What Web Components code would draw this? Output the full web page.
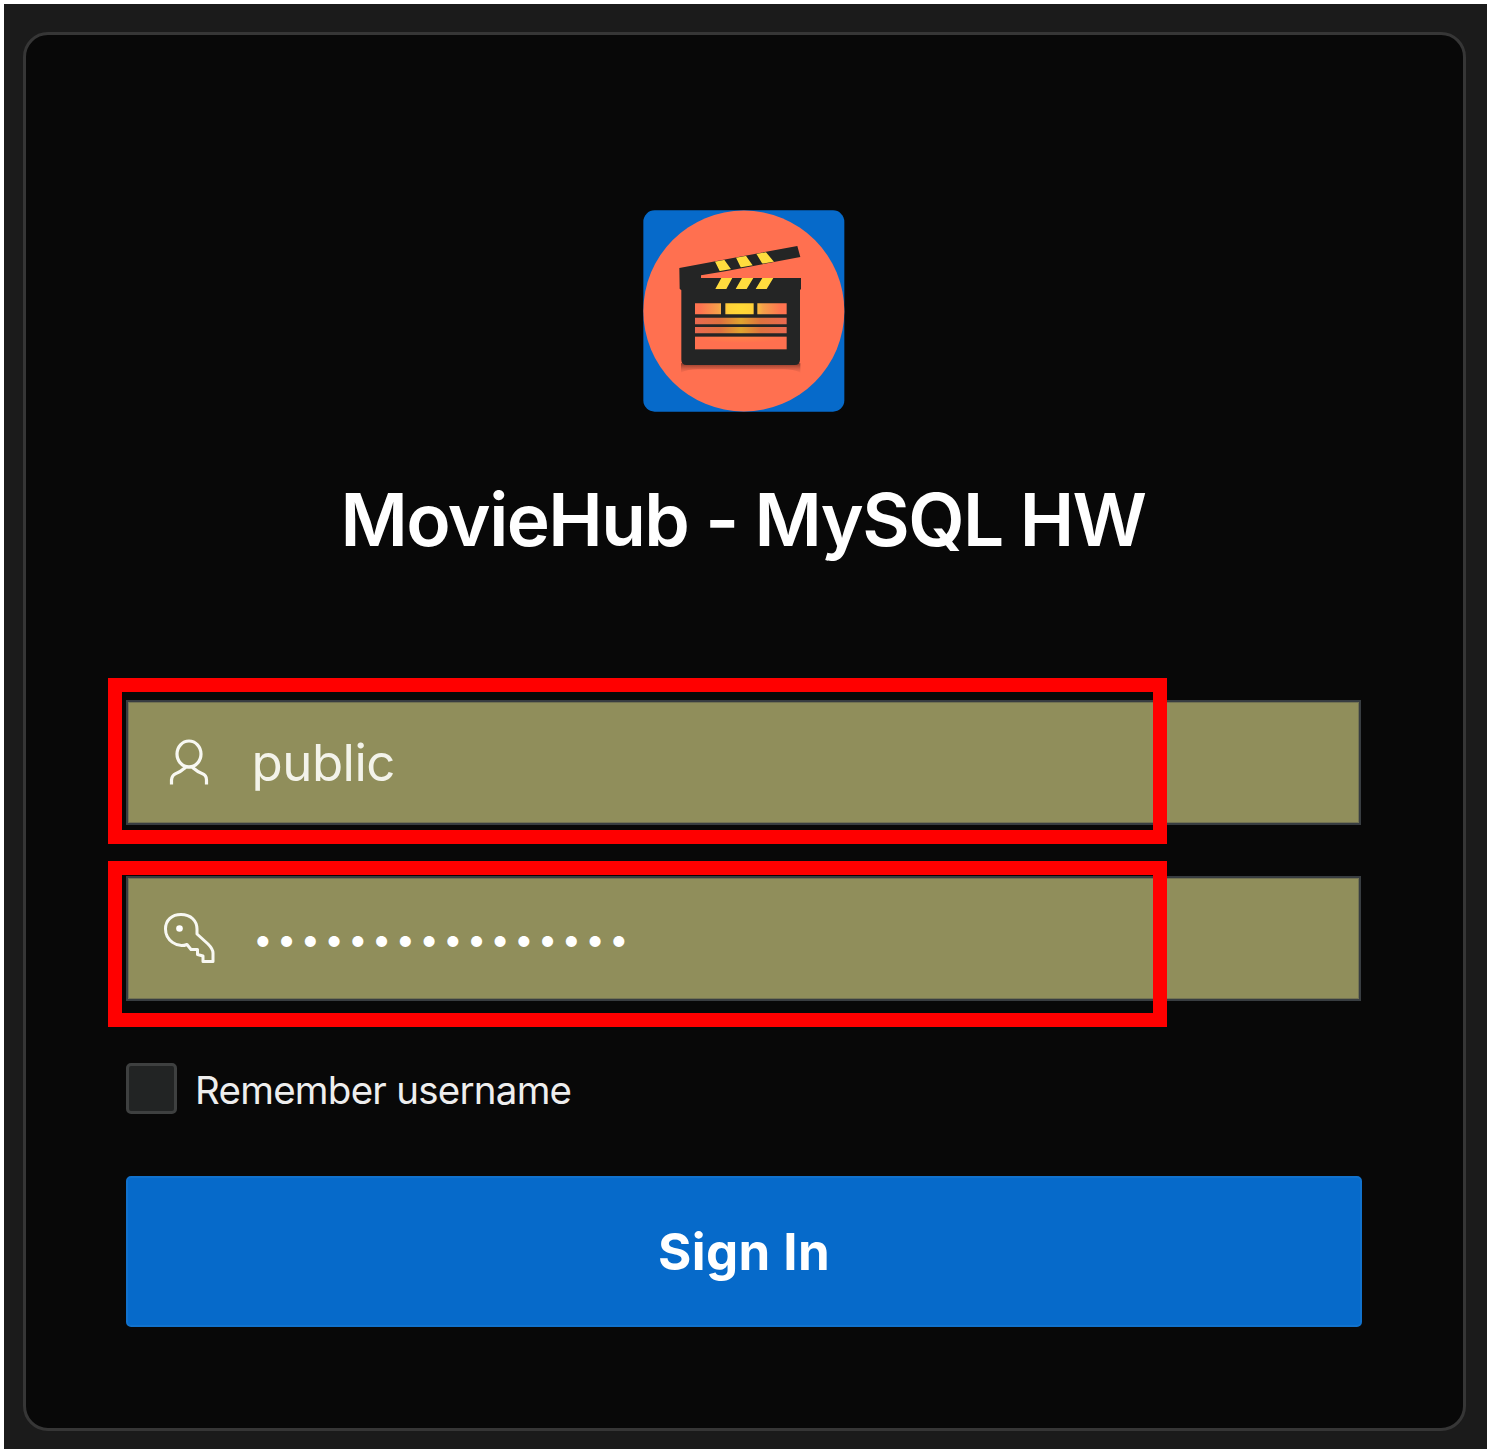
<!DOCTYPE html>
<html lang="en">
<head>
<meta charset="utf-8">
<title>MovieHub - MySQL HW</title>
<style>
html,body{margin:0;background:#fff}
body{width:1489px;height:1452px;overflow:hidden;font-family:Inter,"Liberation Sans",sans-serif;color:#fff}
</style>
</head>
<body>
<login-page>
  <movie-logo></movie-logo>
  <login-title>MovieHub - MySQL HW</login-title>
  <login-field icon="user">public</login-field>
  <login-field icon="key" class="second">••••••••••••••••</login-field>
  <remember-check>Remember username</remember-check>
  <sign-button>Sign In</sign-button>
</login-page>
<script>
const define = (name, html) => customElements.define(name, class extends HTMLElement {
  constructor() {
    super();
    this.attachShadow({mode: 'open'}).innerHTML = typeof html === 'function' ? html(this) : html;
  }
});

define('login-page', `<style>
:host{display:block;box-sizing:border-box;width:1489px;height:1452px;padding:4px 2px 3px 4px}
.back{box-sizing:border-box;height:1445px;background:#1b1b1b;padding:28px 21px 18px 19px}
.card{box-sizing:border-box;height:1399px;border:3px solid #363636;border-radius:25px;background:#080808;padding:175px 101px 0 100px;display:flex;flex-direction:column}
</style><div class="back"><div class="card"><slot></slot></div></div>`);

define('movie-logo', `<style>:host{display:block;width:202px;height:202px;align-self:center}svg{display:block}</style>
<svg width="202" height="202" viewBox="39 30 606 606">
<defs>
<radialGradient id="g" gradientUnits="userSpaceOnUse" cx="332" cy="326" r="135"><stop offset="0" stop-color="#ffda35"/><stop offset=".28" stop-color="#ffd138"/><stop offset=".5" stop-color="#f5a04a"/><stop offset=".9" stop-color="#ff7350"/></radialGradient>
<linearGradient id="l" gradientUnits="userSpaceOnUse" x1="195" x2="470" y1="0" y2="0"><stop offset="0" stop-color="#ea6950"/><stop offset=".28" stop-color="#df713e"/><stop offset=".5" stop-color="#dfa52e"/><stop offset=".72" stop-color="#df713e"/><stop offset="1" stop-color="#ea6950"/></linearGradient>
<linearGradient id="s" x1="0" y1="0" x2="0" y2="1"><stop offset="0" stop-color="#752f22" stop-opacity=".85"/><stop offset="1" stop-color="#c55440" stop-opacity=".1"/></linearGradient>
<radialGradient id="b" cx=".5" cy="0" r=".5"><stop offset="0" stop-color="#ff8445"/><stop offset="1" stop-color="#ff704f"/></radialGradient>
<clipPath id="u"><path d="M148 205 502 139 511 171 219 222Z"/></clipPath>
</defs>
<rect x="40" y="31" width="603" height="604" rx="34" fill="#066aca"/>
<circle cx="341.500" cy="333" r="301.500" fill="#ff7050"/>
<path d="M153 490H511V518Q490 508 460 508H204Q174 508 153 518Z" fill="url(#s)"/>
<path d="M148 204 502 138 511 171 290 213 213 226V234H513V266L510 271V479Q510 495 494 495H170Q154 495 154 479V271L149 266Z" fill="#242525"/>
<g fill="#ffdc3e"><g clip-path="url(#u)"><path d="M253 181 279 174 307 213 272 219ZM316 169 344 162 370 199 335 208ZM377 158 405 153 433 187 398 193Z"/></g>
<path d="M274 234H307L289 267H256ZM336 234H370L350 267H317ZM397 234H430L410 267H377Z"/></g>
<path d="M195 310H273V343H195ZM286 310H371V343H286ZM382 310H470V343H382Z" fill="url(#g)"/>
<path d="M195 353H470V373H195ZM195 381H470V400H195Z" fill="url(#l)"/>
<rect x="195" y="410" width="275" height="38" fill="url(#b)"/>
</svg>`);

define('login-title', `<style>
:host{display:block;margin-top:58px;height:102px;padding-right:2px;font-size:73px;line-height:100px;font-weight:600;letter-spacing:-1.550px;text-align:center;white-space:nowrap}
</style><slot></slot>`);

const icons = {
  user: '<g stroke-width="3.2"><ellipse cx="189" cy="754" rx="12" ry="13"/><path d="M171.500 784.500V780Q172 775 176 773.500C181 772 184 768.500 186 767H192C194 768.500 197 772 202 773.500Q206.500 775 206.500 780V784.500"/></g>',
  key: '<g stroke-width="3"><path d="M187 944.500C177 948.500 165.500 940 165.500 929C165.500 920 172 914.500 181 914.500C191 914.500 197 921 197 929V934L208 944Q213 949 213 953V961.500H203V956L197.500 954.500V949.500H191L187 944.500Z"/></g><circle cx="179.500" cy="928.500" r="3.300" fill="#fff" stroke="none"/>'
};
define('login-field', el => {
  const key = el.getAttribute('icon') === 'key';
  return `<style>
:host{display:block;position:relative;flex:none;margin-top:${key ? 51 : 128}px;height:125px}
.box{box-sizing:border-box;height:125px;width:1235px;background:#908e5b;border:2px solid #383d41;box-shadow:inset 0 0 0 1px #737353;display:flex;align-items:center;padding-left:33px}
svg{flex:none;fill:none;stroke:#f8f8f2;stroke-linejoin:round}
.value{white-space:nowrap;line-height:70px;${key ? 'margin-left:32px;font-size:35px;letter-spacing:4.050px;color:#fff' : 'margin-left:30.500px;font-size:51px;letter-spacing:-.5px;color:#f3f3ea'}}
.mark{position:absolute;left:-18px;top:${key ? -15 : -22}px;width:1059px;height:166px;box-sizing:border-box;border:14px solid #f00}
</style><div class="box"><svg width="60" height="60" viewBox="${key ? '161 909 60 60' : '161 733 60 60'}">${icons[key ? 'key' : 'user']}</svg><span class="value"><slot></slot></span></div><div class="mark"></div>`;
});

define('remember-check', `<style>
:host{display:flex;align-items:center;margin-top:62px;height:51px;font-size:38.500px;letter-spacing:-.75px;color:#eee;white-space:nowrap}
.tick{box-sizing:border-box;width:51px;height:51px;border:3px solid #3e4040;border-radius:5px;background:#222424}
.label{margin-left:18px;padding-top:3px;line-height:50px}
</style><div class="tick"></div><span class="label"><slot></slot></span>`);

define('sign-button', `<style>
:host{display:block;margin-top:62px}
button{box-sizing:border-box;width:1236px;height:151px;padding:0;border:2px solid #1172cd;border-radius:5px;background:#066aca;color:#fff;font:700 51px/147px Inter,"Liberation Sans",sans-serif;letter-spacing:.4px;display:block}
</style><button type="button"><slot></slot></button>`);
</script>
</body>
</html>
